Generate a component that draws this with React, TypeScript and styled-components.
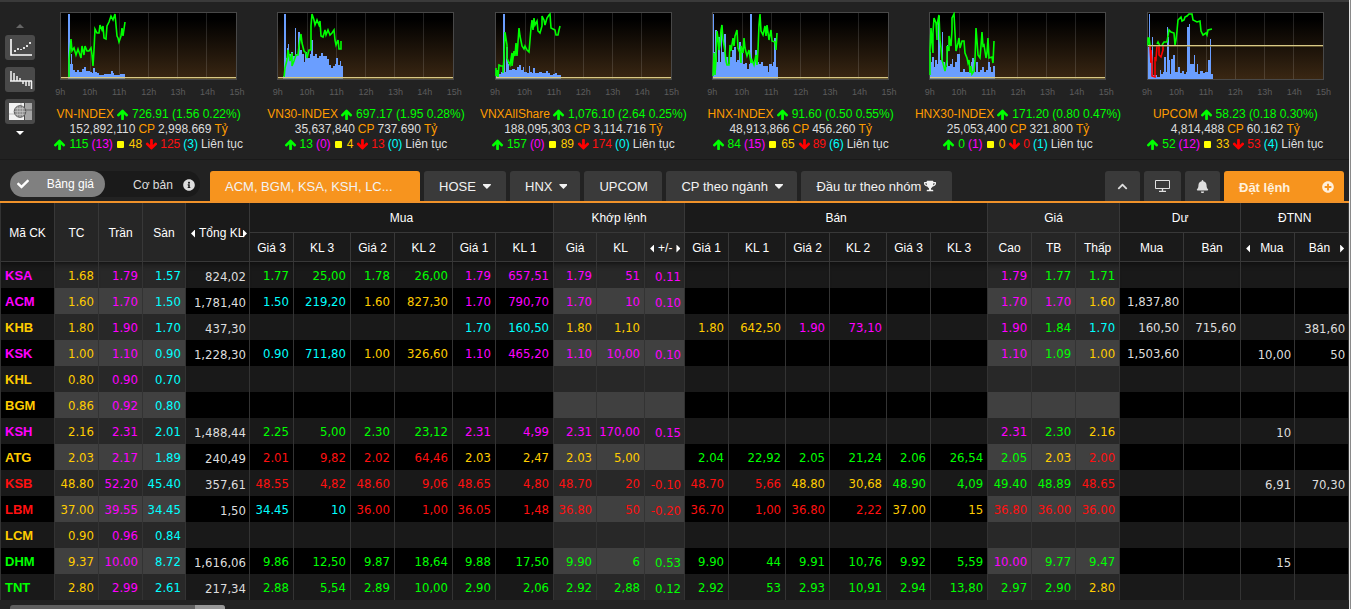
import React from 'react';
import styled, { createGlobalStyle } from 'styled-components';
import { FaBell, FaCheck, FaChevronUp, FaInfoCircle, FaPlusCircle, FaTrophy } from 'react-icons/fa';

type Tone = 'g' | 'r' | 'y' | 'c' | 'p' | 'w' | 'o';

const tones: Record<Tone, string> = {
  g: '#00ff00',
  r: '#ff1010',
  y: '#ffcc00',
  c: '#00ffff',
  p: '#ff00ff',
  w: '#dddddd',
  o: '#ff9c00',
};

const GlobalStyle = createGlobalStyle`
  * { box-sizing: border-box; }
  body {
    margin: 0;
    overflow: hidden;
    background: #222222;
    color: #ffffff;
    font: 12px/15px "Liberation Sans", Arial, sans-serif;
  }
  button {
    margin: 0;
    padding: 0;
    border: 0;
    background: none;
    color: inherit;
    font: inherit;
    cursor: pointer;
  }
  svg { display: block; }
`;

const Page = styled.div`
  display: flex;
  min-height: 100vh;
`;

const Main = styled.main`
  flex: 1;
  min-width: 0;
  border-top: 2px solid #3a3a3a;
`;

const Edge = styled.div`
  width: 2px;
  flex: none;
  border-left: 1px solid #e4e4e4;
  background: #8a8a8a;
`;

/* ---------- index strip ---------- */

const IndexStrip = styled.section`
  display: flex;
  height: 157px;
  padding-right: 5px;
`;

const ToolRail = styled.nav`
  display: flex;
  flex: none;
  flex-direction: column;
  align-items: center;
  gap: 7px;
  width: 40px;
  padding-top: 22px;
`;

const ScrollArrow = styled.button<{ $down?: boolean }>`
  width: 8px;
  height: 4px;
  background: ${(p) => (p.$down ? '#ffffff' : '#666666')};
  clip-path: ${(p) => (p.$down ? 'polygon(0 0, 100% 0, 50% 100%)' : 'polygon(0 100%, 100% 100%, 50% 0)')};
`;

const ToolButton = styled.button`
  width: 30px;
  height: 25px;
  border-radius: 3px;
  background: #4a4a4a;
`;

const Cards = styled.div`
  display: grid;
  flex: 1;
  grid-template-columns: repeat(6, 1fr);
`;

const Card = styled.article`
  display: flex;
  flex-direction: column;
  align-items: center;
  padding-top: 10px;
  white-space: nowrap;
`;

const Hours = styled.div`
  display: grid;
  grid-template-columns: repeat(7, 1fr);
  width: 206px;
  height: 27px;
  padding-top: 6px;
  color: #5c5c5c;
  font-size: 9px;
  line-height: 12px;
  text-align: center;
`;

const Line = styled.div`
  display: flex;
  align-items: center;
  gap: 3px;
  height: 15px;
`;

const Ink = styled.span<{ $tone: Tone }>`
  color: ${(p) => tones[p.$tone]};
`;

const Square = styled.i`
  width: 7px;
  height: 7px;
  margin: 0 2px 0 1px;
  border-radius: 1px;
  background: #ffff00;
`;

const ARROW =
  'M1611 971q0 51-37 90l-75 75q-38 38-91 38-54 0-90-38l-294-293v704q0 52-37.5 84.5t-90.5 32.5h-128q-53 0-90.5-32.5t-37.5-84.5v-704l-294 293q-36 38-90 38t-90-38l-75-75q-38-38-38-90 0-53 38-91l651-651q35-37 90-37 54 0 91 37l651 651q37 39 37 91z';

function Arrow({ down }: { down?: boolean }) {
  return (
    <svg width="12" height="12" viewBox="64 128 1664 1664" aria-hidden="true">
      <path d={ARROW} fill={down ? '#ff0000' : '#00ff00'} transform={down ? 'rotate(180 896 896)' : undefined} />
    </svg>
  );
}

type Segment = { color: string; points: string };

interface IndexData {
  name: string;
  value: string;
  volume: string;
  amount: string;
  up: string;
  ceil: string;
  flat: string;
  down: string;
  floor: string;
  base: number;
  bars: [number, number][];
  lines: Segment[];
}

const green = '#00ff00';

const indexes: IndexData[] = [
  {
    name: 'VN-INDEX', value: '726.91 (1.56 0.22%)', volume: '152,892,110', amount: '2,998.669',
    up: '115', ceil: '(13)', flat: '48', down: '125', floor: '(3)', base: 65,
    bars: [[8, 2], [10, 52], [11, 42], [12, 52], [13, 58], [15, 60], [17, 58], [19, 60], [22, 57], [24, 55], [26, 59], [30, 60], [32, 61], [33, 56], [35, 60], [37, 61], [39, 63], [44, 62], [51, 59], [53, 61], [54, 63], [60, 62], [65, 66]],
    lines: [{ color: green, points: '9,66 9,48 10,38 11,27 12,39 14,36 16,43 18,37 20,43 21,46 22,34 24,43 25,34 27,39 29,39 31,36 32,43 33,54 34,38 35,17 37,21 39,21 40,13 42,18 43,14 44,26 46,27 47,14 49,10 51,4 53,8 55,2 56,13 57,24 58,26 59,30 61,24 62,16 63,24 65,10' }],
  },
  {
    name: 'VN30-INDEX', value: '697.17 (1.95 0.28%)', volume: '35,637,840', amount: '737.690',
    up: '13', ceil: '(0)', flat: '4', down: '13', floor: '(0)', base: 65,
    bars: [[6, 64], [7, 2], [9, 46], [10, 36], [11, 32], [12, 42], [14, 40], [16, 44], [18, 16], [19, 42], [21, 20], [23, 38], [25, 42], [27, 50], [28, 40], [30, 46], [33, 42], [34, 28], [36, 44], [38, 42], [40, 46], [42, 44], [44, 41], [46, 44], [50, 47], [52, 53], [54, 56], [56, 54], [58, 52], [59, 46], [61, 53], [63, 49], [64, 54], [66, 66]],
    lines: [{ color: green, points: '7,66 8,56 10,48 11,38 13,49 15,41 15,54 17,49 19,43 21,43 22,34 24,22 25,31 27,39 29,41 30,46 32,38 34,38 34,14 35,2 37,8 38,13 40,8 42,13 43,9 44,24 46,25 48,18 49,23 51,18 53,23 55,21 57,18 58,28 59,33 61,28 62,37 64,37 64,29' }],
  },
  {
    name: 'VNXAllShare', value: '1,076.10 (2.64 0.25%)', volume: '188,095,303', amount: '3,114.716',
    up: '157', ceil: '(0)', flat: '89', down: '174', floor: '(0)', base: 65,
    bars: [[1, 60], [2, 58], [4, 62], [6, 60], [8, 2], [10, 60], [11, 35], [13, 52], [14, 58], [17, 57], [20, 58], [22, 55], [24, 53], [26, 58], [28, 55], [29, 60], [32, 61], [34, 54], [35, 60], [37, 61], [38, 56], [40, 61], [44, 60], [47, 61], [51, 59], [53, 61], [55, 63], [58, 62], [60, 61], [62, 63], [66, 66]],
    lines: [{ color: green, points: '1,56 1,64 2,58 3,66 4,53 6,54 8,54 8,61 9,44 10,20 12,33 12,46 14,51 15,53 17,41 17,54 19,39 20,44 21,31 22,44 24,16 25,24 27,34 29,37 30,34 32,38 34,40 35,28 36,16 37,8 38,18 39,6 40,13 42,9 43,19 45,21 47,14 47,4 49,8 50,13 52,6 54,3 55,2 56,16 58,17 60,18 61,23 63,23 64,18 65,14' }],
  },
  {
    name: 'HNX-INDEX', value: '91.60 (0.50 0.55%)', volume: '48,913,866', amount: '456.260',
    up: '84', ceil: '(15)', flat: '65', down: '89', floor: '(6)', base: 65,
    bars: [[1, 2], [2, 40], [3, 18], [5, 50], [6, 25], [8, 50], [9, 13], [10, 40], [12, 22], [14, 45], [16, 52], [18, 45], [20, 38], [22, 35], [24, 50], [25, 48], [27, 30], [29, 40], [31, 52], [33, 51], [35, 57], [37, 52], [38, 2], [40, 50], [42, 48], [43, 38], [45, 50], [47, 52], [49, 50], [51, 54], [55, 54], [56, 60], [57, 52], [60, 54], [61, 50], [62, 26], [64, 55], [66, 66]],
    lines: [{ color: green, points: '1,64 2,41 3,63 4,48 5,19 6,26 7,38 8,33 9,18 10,13 11,28 13,39 14,49 15,53 17,53 18,33 19,39 21,26 22,34 23,24 25,18 26,36 28,41 29,51 29,34 31,41 32,26 33,36 35,44 37,38 39,51 40,48 42,53 44,43 45,53 46,38 47,13 48,2 49,19 51,23 53,14 54,24 55,13 57,28 59,18 60,29 63,30 64,38 65,21' }],
  },
  {
    name: 'HNX30-INDEX', value: '171.20 (0.80 0.47%)', volume: '25,053,400', amount: '321.800',
    up: '0', ceil: '(1)', flat: '0', down: '0', floor: '(1)', base: 65,
    bars: [[1, 40], [2, 50], [3, 45], [5, 55], [6, 48], [8, 52], [9, 4], [11, 48], [13, 20], [14, 50], [16, 55], [18, 33], [19, 54], [21, 52], [23, 47], [24, 55], [26, 50], [28, 42], [31, 60], [34, 57], [36, 60], [40, 55], [42, 50], [43, 46], [45, 48], [46, 60], [47, 50], [49, 60], [51, 58], [53, 55], [55, 60], [57, 58], [59, 50], [61, 55], [62, 60], [64, 54], [66, 66]],
    lines: [{ color: green, points: '1,63 1,38 2,16 3,31 4,41 4,21 5,6 7,11 8,28 8,13 10,3 11,28 12,36 13,48 14,51 16,59 18,48 18,34 20,39 20,24 22,34 23,18 23,6 25,2 26,21 27,39 29,31 30,26 31,36 33,29 35,29 36,41 38,46 39,51 40,48 41,61 42,54 43,62 45,59 46,48 47,16 48,29 49,43 51,46 52,34 53,20 54,34 55,33 57,46 58,41 59,26 60,46 63,45 64,51 65,29' }],
  },
  {
    name: 'UPCOM', value: '58.23 (0.18 0.30%)', volume: '4,814,488', amount: '60.162',
    up: '52', ceil: '(12)', flat: '33', down: '53', floor: '(4)', base: 33,
    bars: [[1, 35], [2, 2], [3, 50], [5, 25], [6, 63], [10, 65], [13, 58], [14, 62], [16, 60], [17, 45], [19, 60], [20, 15], [21, 25], [22, 48], [23, 62], [24, 47], [26, 43], [28, 60], [31, 55], [33, 61], [35, 59], [37, 62], [39, 60], [40, 15], [42, 12], [43, 52], [45, 52], [47, 43], [48, 60], [50, 52], [51, 62], [53, 59], [56, 61], [58, 60], [61, 48], [63, 27], [64, 62], [66, 66]],
    lines: [
      { color: green, points: '1,34 1,26 2,26 3,33' },
      { color: '#ff0000', points: '3,34 4,51 4,38 5,50 5,64 8,65 8,45 9,47 10,34' },
      { color: green, points: '10,32 11,30 13,34' },
      { color: '#ff0000', points: '12,34 12,43 14,45 16,38 16,34' },
      { color: green, points: '15,33 17,30 20,30 22,18 24,20 27,21 28,33 29,28 30,19 31,8 34,5 35,9 37,8 38,5 40,4 42,2 45,2 46,8 50,10 53,9 54,19 56,23 59,21 60,23 61,18 65,17' },
    ],
  },
];

function barPath(bars: [number, number][]) {
  const steps = bars.map(([x, top], i) => `${i ? `H${x}` : `M${x} 67`}V${top}`).join('');
  return `${steps}V67Z`;
}

function Chart({ data, id }: { data: IndexData; id: string }) {
  return (
    <svg width="177" height="68" viewBox="0 0 177 68" role="img" aria-label={data.name}>
      <defs>
        <linearGradient id={id} x1="0" y1="0" x2="0" y2="1">
          <stop offset="0.1" stopColor="#000000" />
          <stop offset="1" stopColor="#3a2713" />
        </linearGradient>
      </defs>
      <rect x="0.5" y="0.5" width="176" height="67" fill={`url(#${id})`} stroke="#484848" />
      <path d="M30.5 1V67M59.5 1V67M88.5 1V67M117.5 1V67M146.5 1V67" stroke="#ffffff" strokeOpacity="0.13" />
      <path d={barPath(data.bars)} fill="#6a9eff" />
      {data.lines.map((l) => (
        <polyline key={l.points} points={l.points} fill="none" stroke={l.color} strokeWidth="1.6" />
      ))}
      <path d={`M1 ${data.base + 0.5}H176`} stroke="#d8c987" />
      <path d={`M1 ${data.base + 1.5}H176`} stroke="#8a7a40" strokeOpacity="0.6" />
    </svg>
  );
}

function IndexCard({ data, id }: { data: IndexData; id: string }) {
  return (
    <Card>
      <Chart data={data} id={id} />
      <Hours>
        {['9h', '10h', '11h', '12h', '13h', '14h', '15h'].map((h) => (
          <span key={h}>{h}</span>
        ))}
      </Hours>
      <Line>
        <Ink $tone="o">{data.name}</Ink>
        <Arrow />
        <Ink $tone="g">{data.value}</Ink>
      </Line>
      <Line>
        <Ink $tone="w">{data.volume}</Ink>
        <Ink $tone="o">CP</Ink>
        <Ink $tone="w">{data.amount}</Ink>
        <Ink $tone="o">Tỷ</Ink>
      </Line>
      <Line>
        <Arrow />
        <Ink $tone="g">{data.up}</Ink>
        <Ink $tone="p">{data.ceil}</Ink>
        <Square />
        <Ink $tone="y">{data.flat}</Ink>
        <Arrow down />
        <Ink $tone="r">{data.down}</Ink>
        <Ink $tone="c">{data.floor}</Ink>
        <Ink $tone="w">Liên tục</Ink>
      </Line>
    </Card>
  );
}

/* ---------- tab bar ---------- */

const TabBar = styled.nav`
  display: flex;
  align-items: flex-end;
  gap: 4px;
  height: 44px;
  padding: 0 5px 0 10px;
  border-top: 1px solid #1a1a1a;
  border-bottom: 2px solid #f0922a;
  font-size: 13px;
  white-space: nowrap;
`;

const Switch = styled.div`
  display: flex;
  flex: none;
  width: 190px;
  height: 26px;
  margin: 0 6px 4px 0;
  border-radius: 13px;
  background: #1a1a1a;
`;

const SwitchOption = styled.button<{ $on?: boolean }>`
  display: flex;
  flex: none;
  width: 50%;
  align-items: center;
  justify-content: space-between;
  padding: ${(p) => (p.$on ? '0 11px 0 7px' : '2px 5px 0 28px')};
  border-radius: 13px;
  background: ${(p) => (p.$on ? '#808080' : 'transparent')};
  color: ${(p) => (p.$on ? '#ffffff' : '#dddddd')};
  font-size: 12px;
`;

const Tab = styled.button<{ $on?: boolean; $width?: number }>`
  display: flex;
  flex: none;
  align-items: center;
  gap: 7px;
  min-width: ${(p) => (p.$width ? `${p.$width}px` : 'auto')};
  height: 30px;
  padding: 0 13px 0 15px;
  border-radius: 3px 3px 0 0;
  background: ${(p) => (p.$on ? '#f7941e' : '#3a3a3a')};
  color: #f2f2f2;
`;

const Caret = styled.i`
  width: 8px;
  height: 5px;
  margin-top: 1px;
  background: #f2f2f2;
  clip-path: polygon(0 0, 100% 0, 100% 20%, 50% 100%, 0 20%);
`;

const GroupTab = styled(Tab)`
  gap: 3px;
`;

const Actions = styled.div`
  display: flex;
  gap: 4px;
  margin-left: auto;
`;

const IconTab = styled(Tab)`
  justify-content: center;
  min-width: ${(p) => p.$width ?? 35}px;
  padding: 0;
  color: #dddddd;
`;

const OrderTab = styled(Tab)`
  justify-content: space-between;
  width: 120px;
  padding: 2px 10px 0 15px;
  color: #fff0dc;
  font-weight: bold;
`;

/* ---------- price board ---------- */

const Board = styled.table`
  width: 100%;
  border-left: 1px solid #333333;
  border-spacing: 0;
  table-layout: fixed;
`;

const Head = styled.th<{ $shade?: boolean; $sub?: boolean }>`
  height: ${(p) => (p.$sub ? 29 : 30)}px;
  padding: 2px 0 0;
  border-right: 1px solid #383838;
  border-bottom: 1px solid #383838;
  background: ${(p) => (p.$shade ? '#262626' : '#1a1a1a')};
  font-weight: normal;
  white-space: nowrap;
`;

const Pager = styled.div<{ $align: string; $gap?: number }>`
  position: relative;
  display: flex;
  align-items: center;
  justify-content: ${(p) => p.$align};
  gap: ${(p) => p.$gap ?? 4}px;
  padding: 1px 4px 0 5px;
`;

const PageArrow = styled.button<{ $right?: boolean; $over?: boolean }>`
  flex: none;
  width: 4px;
  height: 8px;
  background: #ffffff;
  clip-path: ${(p) => (p.$right ? 'polygon(0 0, 100% 50%, 0 100%)' : 'polygon(100% 0, 100% 100%, 0 50%)')};
  ${(p) => p.$over && 'position: absolute; right: 2px;'}
`;

const Row = styled.tr<{ $first?: boolean }>`
  background: #191919;
  &:nth-child(even) {
    background: #000000;
  }
  & > * {
    box-shadow: ${(p) => (p.$first ? 'inset 0 7px 6px -6px #0c0c0c' : 'none')};
  }
`;

const Code = styled.th<{ $tone: Tone }>`
  height: 26px;
  padding: 0 0 0 4px;
  border-right: 1px solid #333333;
  color: ${(p) => tones[p.$tone]};
  font-size: 13px;
  text-align: left;
`;

const Cell = styled.td<{ $tone: Tone; $shade: boolean; $low: boolean }>`
  height: 26px;
  padding: ${(p) => (p.$low ? '2px 3px 0 0' : '0 4px 0 0')};
  border-right: 1px solid #333333;
  background: ${(p) => (p.$shade ? '#282828' : 'transparent')};
  color: ${(p) => tones[p.$tone]};
  font-family: "DejaVu Sans Condensed", Tahoma, "DejaVu Sans", sans-serif;
  font-size: 13px;
  text-align: right;
  white-space: nowrap;
  ${Row}:nth-child(even) & {
    background: ${(p) => (p.$shade ? '#404040' : 'transparent')};
  }
`;

const ScrollTrack = styled.div`
  display: flex;
  justify-content: flex-end;
  width: 215px;
  height: 8px;
  margin: 5px 0 0 10px;
  overflow: hidden;
  border-radius: 3px;
  background: #606060;
`;

const ScrollThumb = styled.div`
  width: 30px;
  background: #999999;
`;

const widths = [54, 44, 44, 43, 64, 44, 57, 44, 58, 43, 58, 43, 48, 40, 44, 57, 44, 57, 44, 57, 44, 44, 44, 64, 57, 54, 54];
const shaded = new Set([0, 1, 2, 10, 11, 12, 19, 20, 21]);
const lowered = new Set([3, 12, 24, 25]);

const rows = [
  'pKSA y1.68 p1.79 c1.57 w824,02 g1.77 g25,00 g1.78 g26,00 p1.79 p657,51 p1.79 p51 p0.11 - - - - - - p1.79 g1.77 g1.71 - - - -',
  'pACM y1.60 p1.70 c1.50 w1,781,40 c1.50 c219,20 y1.60 y827,30 p1.70 p790,70 p1.70 p10 p0.10 - - - - - - p1.70 p1.70 y1.60 w1,837,80 - - -',
  'yKHB y1.80 p1.90 c1.70 w437,30 - - - - c1.70 c160,50 y1.80 y1,10 - y1.80 y642,50 p1.90 p73,10 - - p1.90 g1.84 c1.70 w160,50 w715,60 - w381,60',
  'pKSK y1.00 p1.10 c0.90 w1,228,30 c0.90 c711,80 y1.00 y326,60 p1.10 p465,20 p1.10 p10,00 p0.10 - - - - - - p1.10 g1.09 y1.00 w1,503,60 - w10,00 w50',
  'yKHL y0.80 p0.90 c0.70 - - - - - - - - - - - - - - - - - - - - - - -',
  'yBGM y0.86 p0.92 c0.80 - - - - - - - - - - - - - - - - - - - - - - -',
  'pKSH y2.16 p2.31 c2.01 w1,488,44 g2.25 g5,00 g2.30 g23,12 p2.31 p4,99 p2.31 p170,00 p0.15 - - - - - - p2.31 g2.30 y2.16 - - w10 -',
  'yATG y2.03 p2.17 c1.89 w240,49 r2.01 r9,82 r2.02 r64,46 y2.03 y2,47 y2.03 y5,00 - g2.04 g22,92 g2.05 g21,24 g2.06 g26,54 g2.05 y2.03 r2.00 - - - -',
  'rKSB y48.80 p52.20 c45.40 w357,61 r48.55 r4,82 r48.60 r9,06 r48.65 r4,80 r48.70 r20 r-0.10 r48.70 r5,66 y48.80 y30,68 g48.90 g4,09 g49.40 g48.89 r48.65 - - w6,91 w70,30',
  'rLBM y37.00 p39.55 c34.45 w1,50 c34.45 c10 r36.00 r1,00 r36.05 r1,48 r36.80 r50 r-0.20 r36.70 r1,00 r36.80 r2,22 y37.00 y15 r36.80 r36.00 r36.00 - - - -',
  'yLCM y0.90 p0.96 c0.84 - - - - - - - - - - - - - - - - - - - - - - -',
  'gDHM y9.37 p10.00 c8.72 w1,616,06 g9.86 g12,50 g9.87 g18,64 g9.88 g17,50 g9.90 g6 g0.53 g9.90 g44 g9.91 g10,76 g9.92 g5,59 p10.00 g9.77 g9.47 - - w15 -',
  'gTNT y2.80 p2.99 c2.61 w217,34 g2.88 g5,54 g2.89 g10,00 g2.90 g2,06 g2.92 g2,88 g0.12 g2.92 g53 g2.93 g10,91 g2.94 g13,80 g2.97 g2.90 y2.80 - - - -',
].map((line) =>
  line.split(' ').map((token) => (token === '-' ? { tone: 'w' as Tone, text: '' } : { tone: token[0] as Tone, text: token.slice(1) })),
);

function PriceBoard() {
  return (
    <Board>
      <colgroup>
        {widths.map((w, i) => (
          <col key={i} width={w} />
        ))}
      </colgroup>
      <thead>
        <tr>
          <Head rowSpan={2}>Mã CK</Head>
          <Head rowSpan={2} $shade>TC</Head>
          <Head rowSpan={2} $shade>Trần</Head>
          <Head rowSpan={2} $shade>Sàn</Head>
          <Head rowSpan={2}>
            <Pager $align="flex-start">
              <PageArrow aria-label="Cột trước" />
              Tổng KL
              <PageArrow $right $over aria-label="Cột sau" />
            </Pager>
          </Head>
          <Head colSpan={6}>Mua</Head>
          <Head colSpan={3} $shade>Khớp lệnh</Head>
          <Head colSpan={6}>Bán</Head>
          <Head colSpan={3} $shade>Giá</Head>
          <Head colSpan={2}>Dư</Head>
          <Head colSpan={2}>ĐTNN</Head>
        </tr>
        <tr>
          {['Giá 3', 'KL 3', 'Giá 2', 'KL 2', 'Giá 1', 'KL 1'].map((t) => (
            <Head key={t} $sub>{t}</Head>
          ))}
          <Head $sub $shade>Giá</Head>
          <Head $sub $shade>KL</Head>
          <Head $sub $shade>
            <Pager $align="space-between">
              <PageArrow aria-label="Cột trước" />
              +/-
              <PageArrow $right aria-label="Cột sau" />
            </Pager>
          </Head>
          {['Giá 1', 'KL 1', 'Giá 2', 'KL 2', 'Giá 3', 'KL 3'].map((t) => (
            <Head key={t} $sub>{t}</Head>
          ))}
          {['Cao', 'TB', 'Thấp'].map((t) => (
            <Head key={t} $sub $shade>{t}</Head>
          ))}
          <Head $sub>Mua</Head>
          <Head $sub>Bán</Head>
          <Head $sub>
            <Pager $align="flex-start" $gap={10}>
              <PageArrow aria-label="Cột trước" />
              Mua
            </Pager>
          </Head>
          <Head $sub>
            <Pager $align="flex-end" $gap={10}>
              Bán
              <PageArrow $right aria-label="Cột sau" />
            </Pager>
          </Head>
        </tr>
      </thead>
      <tbody>
        {rows.map(([code, ...cells], r) => (
          <Row key={code.text} $first={r === 0}>
            <Code scope="row" $tone={code.tone}>{code.text}</Code>
            {cells.map((c, i) => (
              <Cell key={i} $tone={c.tone} $shade={shaded.has(i)} $low={lowered.has(i)}>{c.text}</Cell>
            ))}
          </Row>
        ))}
      </tbody>
    </Board>
  );
}

function LineToolIcon() {
  return (
    <svg width="30" height="25" viewBox="0 0 30 25" aria-hidden="true">
      <path d="M6 4V20H27" fill="none" stroke="#ffffff" strokeWidth="1.6" />
      <path d="M9 15h2v2h-2zM12 13h2v2h-2zM15 14h2v1h-2zM18 12h2v2h-2zM21 10h2v2h-2zM24 7h2v2h-2z" fill="#e0e0e0" />
    </svg>
  );
}

function BarToolIcon() {
  return (
    <svg width="30" height="25" viewBox="0 0 30 25" aria-hidden="true">
      <path d="M6 4V14M5 14H27M9 6V14M12 9V14M15 11V14M18 14V17M21 14V19M24 14V19M26.5 14V22" fill="none" stroke="#f4f4f4" strokeWidth="1.5" />
    </svg>
  );
}

function MapToolIcon() {
  return (
    <svg width="30" height="25" viewBox="0 0 30 25" aria-hidden="true">
      <path d="M4 4H19V21H4Z" fill="#f2f2f2" />
      <path d="M20 4H27V10H20ZM20 12H27V21H20Z" fill="#a5a5a5" />
      <path d="M4 15H10M16 4V8M20 11H27" stroke="#bdbdbd" />
      <circle cx="15" cy="12.5" r="5.8" fill="#8f8f8f" stroke="#555555" />
      <path d="M9.5 12.5H20.5M10.5 9.5H19.5M10.5 15.5H19.5M15 7V18M12.3 7.6V17.4M17.7 7.6V17.4" stroke="#c4c4c4" strokeWidth="0.7" />
    </svg>
  );
}

function MonitorIcon() {
  return (
    <svg width="15" height="12" viewBox="0 0 15 12" aria-hidden="true">
      <path d="M0.5 0.5H14.5V8.5H0.5Z" fill="none" stroke="#e0e0e0" />
      <path d="M7.5 8V11M4 11.3H11" stroke="#e0e0e0" strokeWidth="1.3" />
    </svg>
  );
}

export default function App() {
  return (
    <Page>
      <GlobalStyle />
      <Main>
        <IndexStrip>
          <ToolRail>
            <ScrollArrow aria-label="Lên" />
            <ToolButton aria-label="Biểu đồ đường"><LineToolIcon /></ToolButton>
            <ToolButton aria-label="Biểu đồ cột"><BarToolIcon /></ToolButton>
            <ToolButton aria-label="Thị trường"><MapToolIcon /></ToolButton>
            <ScrollArrow $down aria-label="Xuống" />
          </ToolRail>
          <Cards>
            {indexes.map((d, i) => (
              <IndexCard key={d.name} data={d} id={`plot${i}`} />
            ))}
          </Cards>
        </IndexStrip>
        <TabBar>
          <Switch>
            <SwitchOption $on><FaCheck size={12} />Bảng giá</SwitchOption>
            <SwitchOption>Cơ bản<FaInfoCircle size={12} /></SwitchOption>
          </Switch>
          <Tab $on $width={210}>ACM, BGM, KSA, KSH, LC...</Tab>
          <Tab $width={82}>HOSE <Caret /></Tab>
          <Tab $width={70}>HNX <Caret /></Tab>
          <Tab $width={78}>UPCOM</Tab>
          <Tab $width={131}>CP theo ngành <Caret /></Tab>
          <GroupTab $width={151}>Đầu tư theo nhóm <FaTrophy size={12} /></GroupTab>
          <Actions>
            <IconTab aria-label="Thu gọn"><FaChevronUp size={11} /></IconTab>
            <IconTab $width={37} aria-label="Màn hình"><MonitorIcon /></IconTab>
            <IconTab aria-label="Thông báo"><FaBell size={13} /></IconTab>
            <OrderTab $on>Đặt lệnh<FaPlusCircle size={12} /></OrderTab>
          </Actions>
        </TabBar>
        <PriceBoard />
        <ScrollTrack><ScrollThumb /></ScrollTrack>
      </Main>
      <Edge />
    </Page>
  );
}
